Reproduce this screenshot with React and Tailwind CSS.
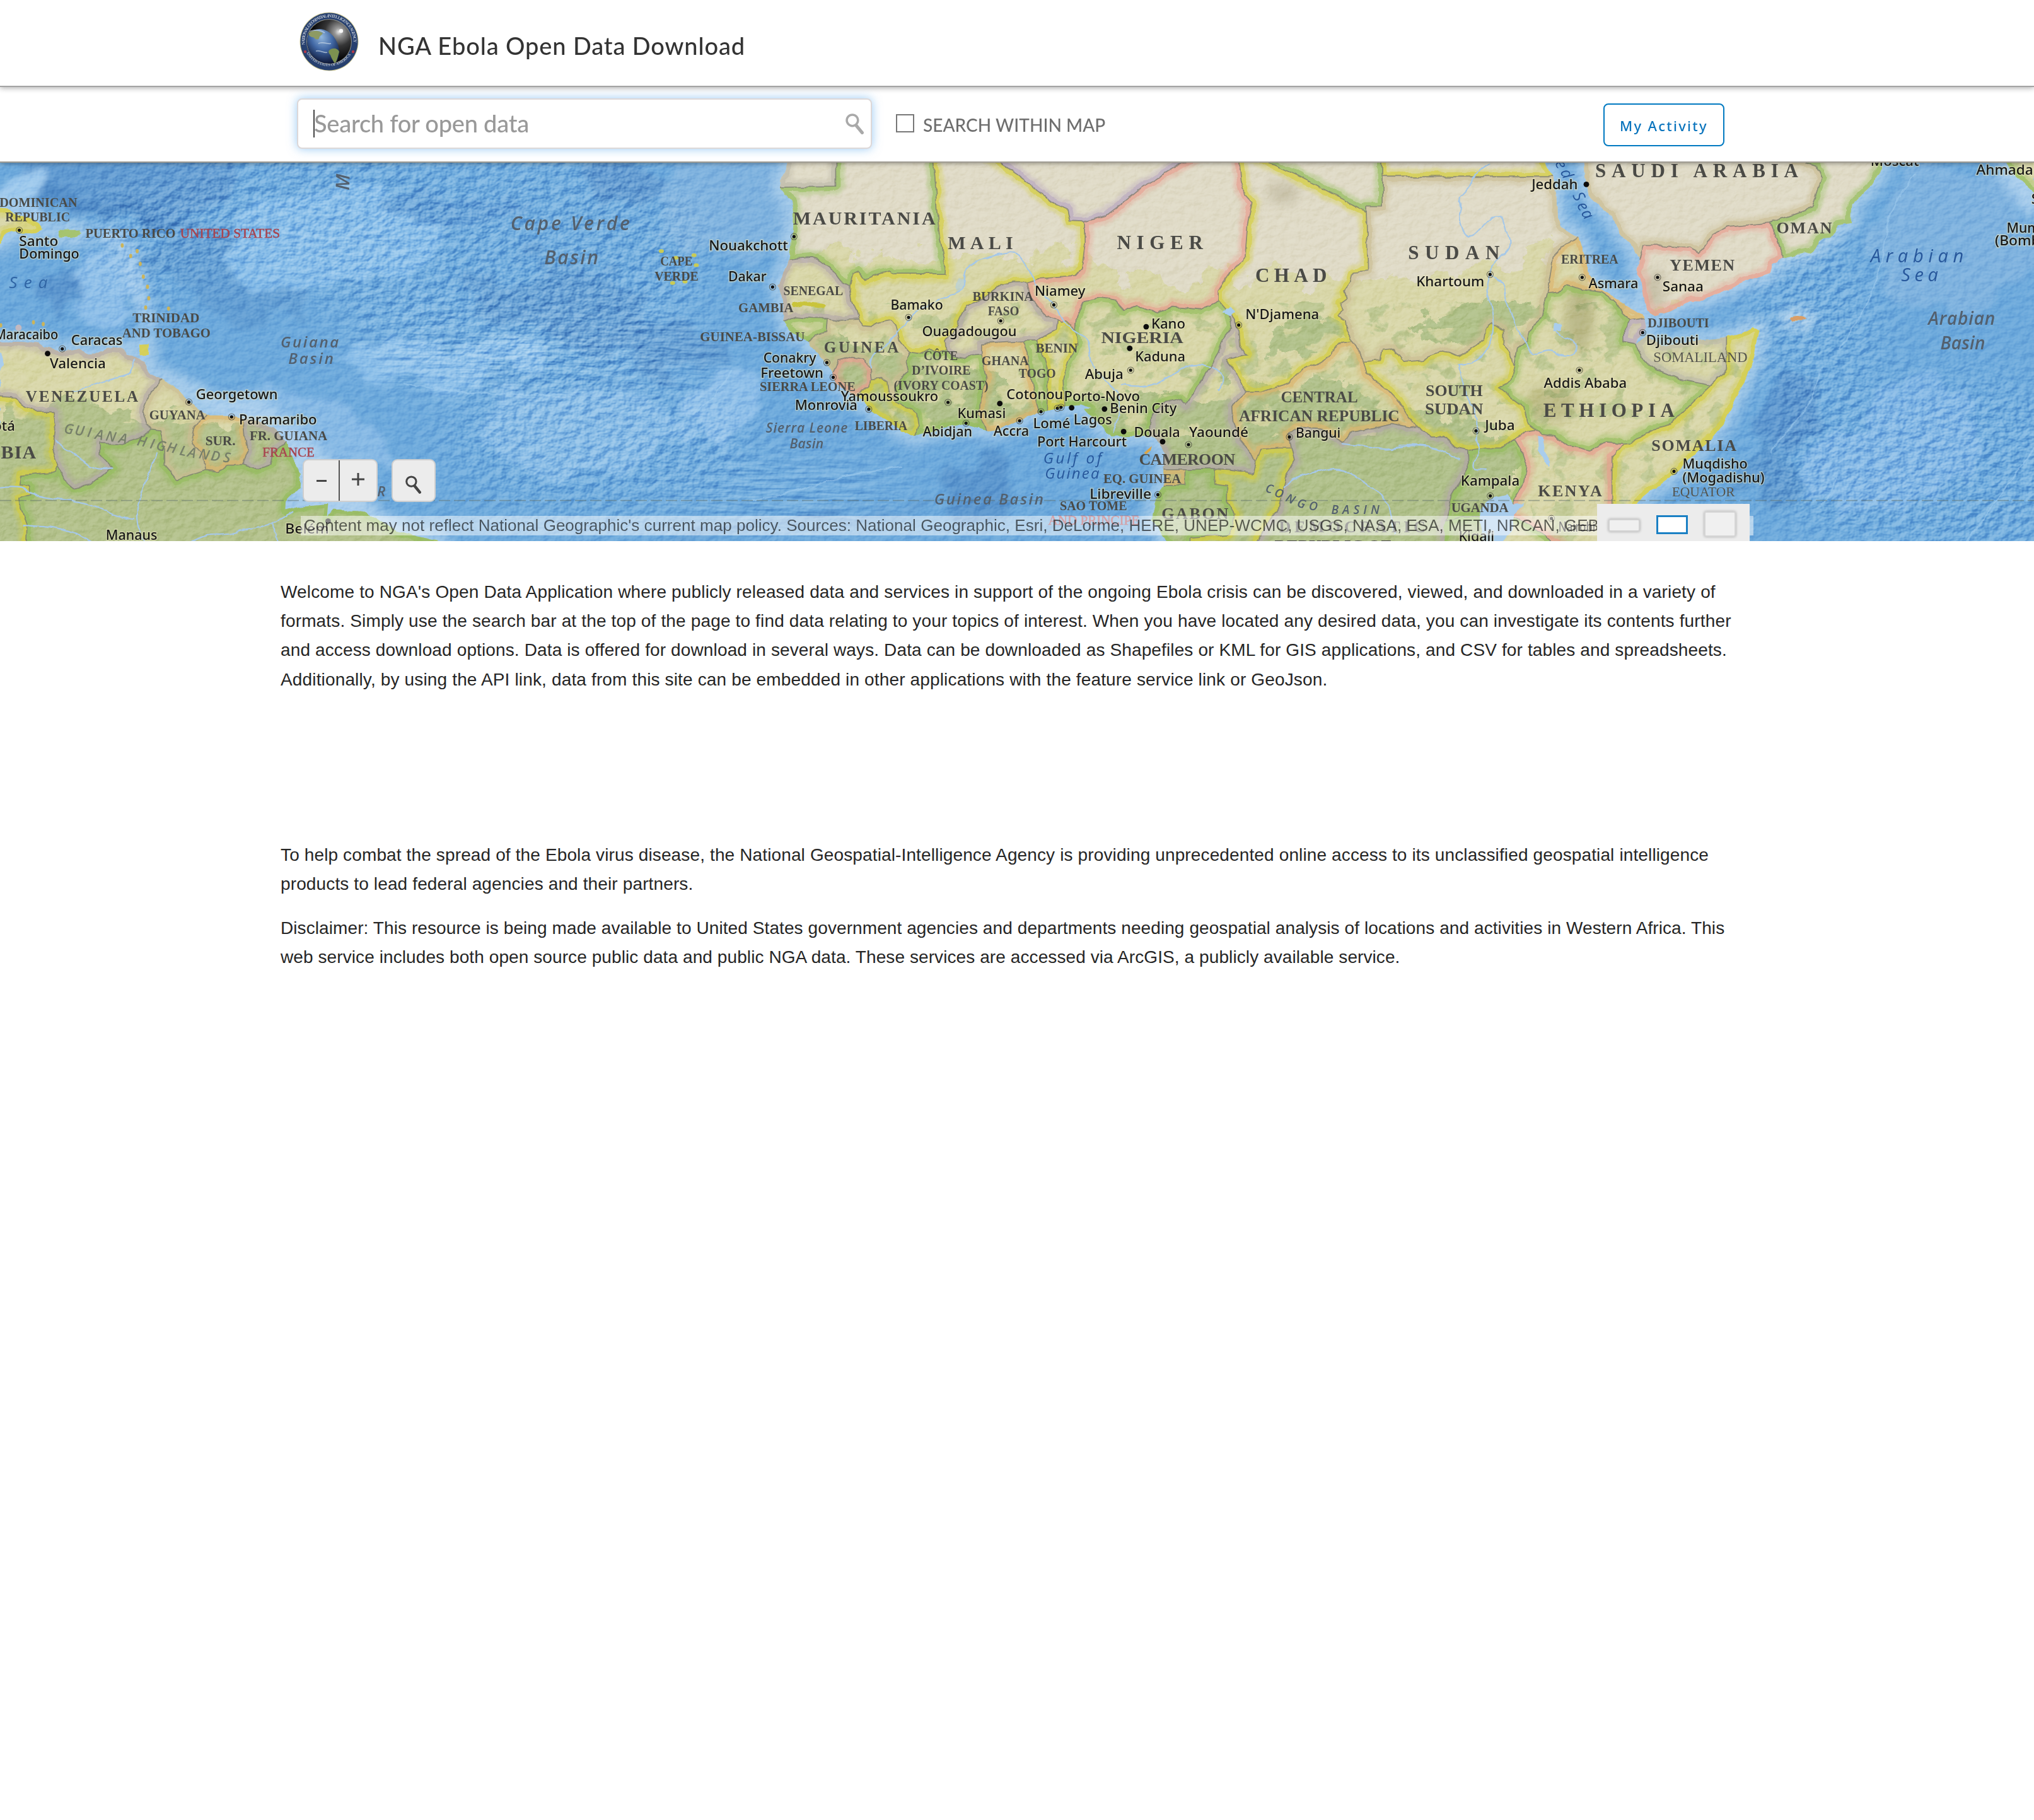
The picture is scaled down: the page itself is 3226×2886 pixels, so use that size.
import React from "react";

/* ---------- Map geometry ----------
   The map is surveyed on six sheets. Each sheet has its own origin and grid
   step; points are written as "SHEET x,y x,y ..." and projected to map pixels. */
const SHEETS = {
  A: [0, 0.40816],
  B: [640, 0.35714],
  C: [1180, 0.35714],
  D: [1700, 0.35714],
  E: [2220, 0.33333],
  F: [2700, 0.33546],
};
const TOP = 250;
const STEP_Y = 0.39;
const px = (s, x) => SHEETS[s][0] + x * SHEETS[s][1];
const py = (y) => TOP + y * STEP_Y;

function pts(src) {
  let sheet = "A";
  const out = [];
  src.split(/\s+/).forEach((t) => {
    if (SHEETS[t]) sheet = t;
    else if (t.includes(",")) {
      const [x, y] = t.split(",").map(Number);
      out.push([px(sheet, x), py(y)]);
    }
  });
  return out;
}
const toD = (p) => "M" + p.map(([x, y]) => x.toFixed(1) + " " + y.toFixed(1)).join("L");
const line = (src) => toD(pts(src));

/* Smooth curve through points, used for rivers and sea ridges. */
function curve(src) {
  const p = pts(src);
  let d = `M${p[0][0]} ${p[0][1]}`;
  for (let i = 1; i < p.length - 1; i++) {
    const mx = (p[i][0] + p[i + 1][0]) / 2;
    const my = (p[i][1] + p[i + 1][1]) / 2;
    d += `Q${p[i][0]} ${p[i][1]} ${mx} ${my}`;
  }
  const l = p[p.length - 1];
  return d + `L${l[0]} ${l[1]}`;
}

/* Arcs shared by neighbouring countries; names starting with "c_" are coasts. */
const ARCS = {
  c_ws: "C 200,-60 195,20 180,60 165,85 160,118",
  ws_mr: "C 160,118 410,116 410,20 410,-60",
  c_mr: "C 160,118 185,150 210,175 218,220 215,300 205,370 200,412",
  mr_sn: "C 200,412 230,408 300,403 340,415 375,440 400,465 430,500 470,520",
  mr_ml: "C 470,520 485,470 510,460 540,495 580,480 640,462 660,473 893,473 895,440 890,420 870,330 855,200 850,100 842,20 838,-60",
  c_sn: "C 200,412 190,440 165,490 148,515 165,545 172,590 175,640 178,662",
  sn_gw: "C 178,662 230,645 300,650 370,652",
  sn_gn: "C 370,652 430,662 510,658",
  sn_ml: "C 470,520 480,580 500,620 510,658",
  ml_gn: "C 510,658 530,682 560,685 590,670 650,660 675,680 690,740 715,770 735,790",
  c_gw: "C 178,662 205,700 240,725 290,750",
  gw_gn: "C 370,652 365,705 320,715 290,750",
  c_gn: "C 290,750 320,790 350,820 395,870",
  gn_sl: "C 395,870 420,825 480,808 530,815 560,860 565,900",
  c_sl: "C 395,870 410,920 450,945 500,965",
  sl_lr: "C 565,900 560,930 500,965",
  gn_lr: "C 565,900 610,895 635,910 645,965 670,990",
  lr_ci: "C 670,990 720,1010 770,1040 778,1090 760,1135",
  c_lr: "C 500,965 560,1020 620,1060 700,1110 760,1135",
  gn_ci: "C 735,790 715,830 725,870 690,900 670,940 670,990",
  ml_ci: "C 735,790 780,795 830,775 870,790 895,780",
  ci_bf: "C 895,780 930,805 980,815 1010,803 1055,800",
  ci_gh: "C 1055,800 1080,900 1050,980 1045,1040 1075,1110",
  c_ci: "C 760,1135 830,1110 900,1095 985,1085 1075,1110",
  ml_bf: "C 895,780 890,745 930,715 960,650 990,600 1060,570 1130,520 1200,505 1255,505",
  bf_ne: "C 1255,505 1270,560 1310,610 1345,640 1390,660",
  bf_bj: "C 1390,660 1385,700 1330,725 1300,745",
  bf_tg: "C 1300,745 1240,745",
  bf_gh: "C 1240,745 1150,750 1055,755 1055,800",
  gh_tg: "C 1240,745 1260,790 1275,900 1290,960 1310,1035",
  tg_bj: "C 1300,745 1330,810 1350,870 1345,1025",
  c_tg: "C 1310,1035 1345,1025",
  c_gh: "C 1075,1110 1130,1105 1220,1070 1310,1035",
  bj_ne: "C 1390,660 1410,668 1430,660 1470,695",
  bj_ng: "C 1470,695 1480,760 1435,840 1420,900 1425,1010",
  c_bj: "C 1345,1025 1425,1010",
  ml_ne: "C 1255,505 1310,490 1390,485 1470,480 1500,450 1515,350 1515,258",
  ml_dz: "C 1020,-60 1140,20 1230,75 1300,130 1370,180 1440,210 1450,255 1515,258",
  dz_ne: "C 1515,258 D 150,235 200,200 300,125 480,25 640,-60",
  ne_td: "D 740,-60 745,20 752,90 770,150 800,180 780,270 770,400 700,470 650,540 650,578",
  ne_ng: "D 14,695 20,650 50,585 130,570 190,580 230,620 290,600 380,632 450,605 570,615 650,578",
  td_ly: "D 700,-60 880,20 1000,70 1150,142 1308,218",
  ly_sd: "D 1308,218 1308,197 1378,197 1378,75",
  ly_eg: "D 1378,75 1378,-60",
  eg_sd: "D 1378,75 1568,75 E 730,75",
  c_eg: "E 640,-60 700,40 730,75",
  td_sd: "D 1308,218 1315,460 1250,465 1240,500 1210,540 1220,570 1190,590 1205,620 1180,640 1215,660 1220,700 1245,745",
  td_cf: "D 1245,745 1180,755 1140,810 1090,840 1020,860 970,910 900,930 840,950 775,950",
  ng_td: "D 650,578 690,620",
  td_cm: "D 690,620 720,660 745,700 750,760 775,800 685,820 730,870 775,950",
  ng_cm: "D 690,620 710,690 670,740 650,790 600,870 560,930 510,1000 480,980 400,1000 355,1040 345,1130",
  c_ng: "C 1425,1010 1500,1005 1545,1020 D 60,1020 120,1080 170,1135 250,1130 345,1130",
  c_cm: "D 345,1130 390,1160 415,1210 410,1266",
  cm_gq: "D 410,1266 505,1266",
  cm_ga: "D 505,1266 630,1266",
  cm_cg: "D 630,1266 700,1270 805,1285 815,1235",
  cm_cf: "D 775,950 710,1010 715,1070 750,1150 805,1210 815,1235",
  cf_cg: "D 815,1235 840,1185 920,1180 975,1180",
  cf_cd: "D 975,1180 960,1120 1010,1095 1110,1100 1200,1155 1250,1115 1330,1100 1420,1080 1500,1095 E 75,1090",
  cf_ss: "D 1295,825 1310,880 1390,930 1456,995 E 40,1050 75,1090",
  cf_sd: "D 1245,745 1280,790 1295,825",
  sd_ss: "D 1295,825 1370,820 1380,780 1430,775 E 20,830 110,822 140,805 200,785 240,790 280,805 330,780 400,740 410,690 440,670 490,700 490,760 530,800 545,850",
  sd_et: "E 545,850 560,770 605,740 630,680 680,640 700,550",
  sd_er: "E 700,550 715,480 730,400 775,360 850,320",
  c_sd: "E 730,75 745,150 750,240 770,280 850,320",
  c_er: "E 850,320 880,400 900,470 950,530 1010,560 1080,600 1150,635 1165,650",
  er_et: "E 700,550 760,545 800,515 870,535 960,545 1020,580 1060,630 1100,660",
  er_dj: "E 1100,660 1165,650",
  et_dj: "E 1100,660 1065,700 1065,745 1125,755",
  c_dj: "E 1165,650 1172,690 1150,712 1125,755",
  et_sl: "E 1125,755 1150,810 1220,860 1330,900 1480,925",
  sl_so: "E 1480,925 1555,860 1555,728",
  c_sml: "E 1125,755 1175,725 1250,765 1400,745 1555,728",
  c_so: "E 1555,728 F 180,715 240,685 270,700 255,760 240,830 200,900 150,990 100,1080 30,1150 0,1175 E 1380,1225 1300,1290 1200,1350 1130,1400 1080,1470 1060,1650",
  et_so: "E 1480,925 1400,990 1290,1085 1200,1105 1100,1158 1065,1162",
  et_ke: "E 650,1105 680,1125 740,1130 800,1170 910,1190 980,1155 1065,1162",
  so_ke: "E 1065,1162 1010,1220 1010,1400 1010,1650",
  ss_et: "E 650,1105 610,1080 590,1010 540,980 470,932 530,900 545,850",
  ss_ke: "E 545,1140 600,1112 650,1105",
  ss_ug: "E 320,1190 400,1180 480,1180 545,1140",
  ss_cd: "E 75,1090 150,1132 210,1132 270,1180 320,1190",
  cd_ug: "E 320,1190 325,1260 250,1370 220,1480",
  ug_ke: "E 545,1140 580,1190 605,1260 590,1330 540,1390 535,1460",
  ug_tz: "E 220,1480 300,1458 535,1460",
  ke_tz: "E 535,1460 640,1505 740,1564 800,1650",
  cg_cd: "D 975,1180 988,1230 950,1290 920,1420 860,1500 820,1564 800,1650",
  ga_cg: "D 630,1266 632,1325 690,1332 690,1400 722,1450 700,1530 525,1545 525,1650",
  gq_ga: "D 505,1266 505,1330 408,1330",
  c_gq: "D 410,1266 408,1330",
  c_ga: "D 408,1330 390,1360 370,1420 358,1470 420,1560 500,1650",
  c_sa: "E 860,-60 875,20 880,80 900,150 960,200 1010,240 1060,320 1110,360 1140,415",
  sa_ye: "E 1140,415 1160,355 1250,355 1380,365 1425,385 1450,360 1490,310 F 120,280 320,262",
  sa_om: "F 320,262 520,200 565,80 540,30 440,10 430,-60",
  ye_om: "F 320,262 385,405",
  c_ye: "E 1140,415 1132,460 1150,500 1160,560 1175,620 1215,640 1290,620 1380,580 F 0,580 100,540 230,490 320,465 335,430 385,405",
  c_om: "F 385,405 520,380 550,330 610,325 640,270 700,262 705,190 750,150 800,110 850,40 845,-60",
  c_ve: "A -60,745 60,745 150,755 170,770 240,788 300,775 340,797 380,795 420,775 470,768 500,800 560,830 590,880 630,900",
  ve_gy: "A 630,900 590,950 570,990 555,1030 570,1080 590,1105",
  c_gy: "A 630,900 680,930 730,985 780,1030 800,1045",
  gy_sr: "A 800,1045 755,1100 745,1160 790,1210 800,1270",
  gy_br: "A 590,1105 625,1110 640,1170 640,1250 690,1310 740,1290 800,1270",
  c_sr: "A 800,1045 900,1045 945,1060",
  sr_gf: "A 945,1060 950,1130 962,1190 940,1250",
  sr_br: "A 800,1270 850,1275 880,1250 940,1250",
  c_gf: "A 945,1060 1000,1070 1060,1100 1115,1150",
  gf_br: "A 940,1250 1000,1270 1050,1250 1060,1200 1115,1150",
  ve_br: "A 590,1105 540,1140 470,1165 390,1160 390,1205 440,1260 400,1290 350,1330 290,1345 250,1310 225,1252",
  co_ve: "A -60,965 60,975 100,1015 130,1030 205,1030 215,1100 205,1190 225,1252",
  co_br: "A 225,1252 215,1280 80,1292 75,1330 110,1335 120,1370 75,1385 80,1420 105,1490 100,1650",
  c_br: "A 1115,1150 1130,1210 1168,1280 1165,1340 1110,1400 1108,1435 1160,1420 1275,1410 1270,1465 1300,1430 1400,1435 1450,1460 1540,1515 B 60,1540 160,1560 200,1650",
  ug_low: "E 220,1480 190,1650",
  tz_low: "E 190,1650 220,1480",
  co_low: "A -60,1650",
};

const C = { green: "#93bd5a", yellow: "#d3cd3c", pink: "#e79f90", mauve: "#b2a6a9", orange: "#dcb46c", tan: "#cabd93", grey: "#bdb9a9", purple: "#b8a6bf" };

/* Country: id, border tint, ring of arcs in order */
const COUNTRIES = [
  ["ws", C.grey, "c_ws ws_mr"],
  ["mr", C.green, "ws_mr c_mr mr_sn mr_ml"],
  ["sn", C.mauve, "mr_sn sn_ml sn_gn sn_gw c_sn"],
  ["gw", C.green, "sn_gw gw_gn c_gw"],
  ["gn", C.tan, "sn_gn ml_gn gn_ci gn_lr gn_sl c_gn gw_gn"],
  ["sl", C.pink, "gn_sl sl_lr c_sl"],
  ["lr", C.yellow, "gn_lr lr_ci c_lr sl_lr"],
  ["ci", C.green, "ml_ci ci_bf ci_gh c_ci lr_ci gn_ci"],
  ["gh", C.orange, "bf_gh gh_tg c_gh ci_gh"],
  ["tg", C.green, "bf_tg tg_bj c_tg gh_tg"],
  ["bj", C.yellow, "bj_ne bj_ng c_bj tg_bj bf_bj"],
  ["bf", C.mauve, "ml_bf bf_ne bf_bj bf_tg bf_gh ci_bf"],
  ["ml", C.yellow, "mr_ml sn_ml ml_gn ml_ci ml_bf ml_ne ml_dz"],
  ["dz", C.purple, "ml_dz dz_ne"],
  ["ne", C.pink, "dz_ne ne_td ne_ng bj_ne bf_ne ml_ne"],
  ["ng", C.green, "ne_ng ng_td ng_cm c_ng bj_ng"],
  ["td", C.yellow, "ne_td ng_td td_cm td_cf td_sd td_ly"],
  ["ly", C.green, "td_ly ly_sd ly_eg"],
  ["eg", C.yellow, "ly_eg eg_sd c_eg"],
  ["sd", C.tan, "eg_sd c_sd sd_er sd_et sd_ss cf_sd td_sd ly_sd"],
  ["er", C.orange, "sd_er c_er er_dj er_et"],
  ["dj", C.purple, "er_dj c_dj et_dj"],
  ["et", C.green, "er_et et_dj et_sl et_so et_ke ss_et sd_et"],
  ["sml", C.grey, "c_sml sl_so et_sl"],
  ["so", C.yellow, "sl_so et_so so_ke c_so"],
  ["ke", C.pink, "ss_ke et_ke so_ke ke_tz ug_ke"],
  ["ug", C.green, "ss_ug ug_ke ug_tz cd_ug"],
  ["ss", C.yellow, "sd_ss ss_et ss_ke ss_ug ss_cd cf_ss"],
  ["cf", C.orange, "td_cf cm_cf cf_cg cf_cd cf_ss cf_sd"],
  ["cm", C.mauve, "ng_cm c_cm cm_gq cm_ga cm_cg cm_cf td_cm"],
  ["gq", C.orange, "cm_gq gq_ga c_gq"],
  ["ga", C.green, "cm_ga ga_cg c_ga gq_ga"],
  ["cg", C.yellow, "cm_cg cf_cg cg_cd ga_cg"],
  ["cd", C.mauve, "cf_cd ss_cd cd_ug ug_low cg_cd"],
  ["tz", C.green, "ug_tz ke_tz tz_low"],
  ["sa", C.tan, "c_sa sa_ye sa_om"],
  ["ye", C.pink, "sa_ye ye_om c_ye"],
  ["om", C.green, "sa_om ye_om c_om"],
  ["ve", C.mauve, "c_ve ve_gy ve_br co_ve"],
  ["gy", C.tan, "c_gy gy_sr gy_br ve_gy"],
  ["sr", C.orange, "c_sr sr_gf sr_br gy_sr"],
  ["gf", C.mauve, "c_gf gf_br sr_gf"],
  ["co", C.yellow, "co_ve co_br co_low"],
  ["br", C.green, "co_br ve_br gy_br sr_br gf_br c_br"],
];

const ISLANDS = [
  ["do", C.yellow, "A -60,195 30,205 60,225 100,240 150,262 165,290 140,305 60,300 20,315 5,345 -60,350"],
  ["pr", C.green, "A 230,292 310,292 318,305 300,322 232,320"],
  ["tt", C.yellow, "A 545,760 578,758 575,798 540,800"],
  ["skt", "#d98a52", "F 410,650 450,644 490,652 470,664 425,664"],
  ["in", C.green, "F 1380,-60 1480,70 1530,110 1600,165 1650,-60"],
];

/* Joins arcs into one ring, turning each to start where the last one ended. */
function ring(spec) {
  const out = spec.split(" ").map((n) => pts(ARCS[n]));
  const d2 = (a, b) => (a[0] - b[0]) ** 2 + (a[1] - b[1]) ** 2;
  const first = out[0];
  const next = out[1];
  const near = (p) => Math.min(d2(p, next[0]), d2(p, next[next.length - 1]));
  if (near(first[0]) < near(first[first.length - 1])) first.reverse();
  for (let i = 1; i < out.length; i++) {
    const end = out[i - 1][out[i - 1].length - 1];
    const a = out[i];
    if (d2(a[a.length - 1], end) < d2(a[0], end)) a.reverse();
  }
  return toD(out.flat()) + "Z";
}

const SHAPES = [
  ...COUNTRIES.map(([id, color, spec]) => [id, color, ring(spec)]),
  ...ISLANDS.map(([id, color, src]) => [id, color, line(src) + "Z"]),
];
const BORDERS = Object.keys(ARCS)
  .filter((k) => !k.startsWith("c_") && !k.endsWith("_low"))
  .map((k) => line(ARCS[k]))
  .join("");

const RIVERS = [
  "C 560,850 560,800 630,770 690,700 770,620 880,570 960,545 990,510 965,470 1010,430 1080,400 1180,380 1220,390 1250,440 1285,480 1290,520 1390,610 1410,660 1470,700 1530,740 1535,800 1550,850 D 130,880 180,940 215,950 210,1040 180,1120",
  "D 215,925 320,940 430,890 500,845 580,840 610,850",
  "D 620,850 670,870 680,910 650,945",
  "E 430,20 370,50 330,120 280,160 295,200 280,240 310,315 350,322 400,270 450,232 490,240 500,290 530,330 520,380 440,420 430,470 405,540 440,600 450,680 440,740 400,800 350,835 280,840",
  "E 430,470 480,490 510,590 545,650 560,710 600,740 620,800 680,790 720,780 780,810 835,800 838,745 780,730 740,700",
  "E 280,840 290,900 320,970 370,1050 375,1100 360,1140 390,1190 355,1230 350,1270 410,1270",
  "E 0,1170 80,1165 200,1185 280,1230",
  "D 940,1340 980,1300 1100,1270 1200,1260 1280,1310 1400,1380 1410,1450 1440,1530",
  "D 1200,1160 1300,1170 1400,1190 1500,1170 1568,1175",
  "A 520,820 510,880 430,900 330,935 280,945",
  "A 215,1150 260,1190 330,1240 380,1265 440,1262",
  "A 610,1200 580,1280 545,1370 525,1470 560,1564",
  "A 0,1340 80,1330 120,1370 230,1390 330,1405 400,1430 450,1460 520,1470",
  "A 90,1495 200,1500 300,1530 360,1564",
  "A 740,1564 800,1530 880,1535 960,1510 1040,1500 1070,1480 1140,1440",
  "A 1065,1490 1075,1564",
];

/* Map labels: [sheet, x start, x end, baseline, text, kind, size] */
const LABELS = [
  ["A", -2, 300, 197, "DOMINICAN", "s", 21],
  ["A", 20, 272, 258, "REPUBLIC", "s", 21],
  ["A", 332, 682, 323, "PUERTO RICO", "s", 21],
  ["A", 700, 1088, 323, "UNITED STATES", "r", 21],
  ["A", 78, 230, 358, "Santo", "c"],
  ["A", 78, 312, 408, "Domingo", "c"],
  ["A", 35, 185, 528, "Sea", "b", 26],
  ["A", 515, 775, 669, "TRINIDAD", "s", 21],
  ["A", 475, 818, 730, "AND TOBAGO", "s", 21],
  ["A", -18, 230, 738, "Maracaibo", "c"],
  ["A", 280, 480, 760, "Caracas", "c"],
  ["A", 197, 415, 856, "Valencia", "c"],
  ["A", 100, 537, 992, "VENEZUELA", "s", 25],
  ["A", 765, 1083, 980, "Georgetown", "c"],
  ["A", 580, 798, 1063, "GUYANA", "s", 21],
  ["A", 932, 1235, 1083, "Paramaribo", "c"],
  ["A", 970, 1272, 1149, "FR. GUIANA", "s", 21],
  ["A", 798, 915, 1169, "SUR.", "s", 21],
  ["A", 1020, 1222, 1215, "FRANCE", "r", 21],
  ["A", -56, 62, 1109, "gotá", "c"],
  ["A", -128, 140, 1222, "OMBIA", "s", 30],
  ["A", 1090, 1316, 770, "Guiana", "w", 24],
  ["A", 1120, 1296, 837, "Basin", "w", 24],
  ["A", 415, 615, 1555, "Manaus", "c"],
  ["A", 1112, 1282, 1529, "Belém", "c"],
  ["A", 1466, 1492, 1376, "R", "w", 22],
  ["B", 475, 1005, 292, "Cape Verde", "w", 30],
  ["B", 625, 865, 431, "Basin", "w", 30],
  ["B", 1140, 1283, 436, "CAPE", "s", 21],
  ["B", 1115, 1310, 497, "VERDE", "s", 21],
  ["C", -152, 200, 374, "Nouakchott", "c"],
  ["C", -66, 104, 502, "Dakar", "c"],
  ["C", 218, 850, 270, "MAURITANIA", "s", 30],
  ["C", 905, 1195, 370, "MALI", "s", 30],
  ["C", 175, 440, 557, "SENEGAL", "s", 20],
  ["C", -25, 220, 626, "GAMBIA", "s", 21],
  ["C", -195, 270, 744, "GUINEA-BISSAU", "s", 21],
  ["C", 355, 687, 792, "GUINEA", "s", 25],
  ["C", 655, 888, 616, "Bamako", "c"],
  ["C", 1015, 1285, 580, "BURKINA", "s", 21],
  ["C", 1083, 1222, 640, "FASO", "s", 21],
  ["C", 1295, 1520, 560, "Niamey", "c"],
  ["C", 795, 1215, 725, "Ouagadougou", "c"],
  ["C", 1295, 1482, 792, "BENIN", "s", 21],
  ["C", 798, 950, 822, "CÔTE", "s", 21],
  ["C", 745, 1007, 880, "D’IVOIRE", "s", 21],
  ["C", 665, 1085, 942, "(IVORY COAST)", "s", 21],
  ["C", 1055, 1265, 843, "GHANA", "s", 20],
  ["C", 1220, 1385, 894, "TOGO", "s", 21],
  ["C", 90, 325, 832, "Conakry", "c"],
  ["C", 78, 357, 893, "Freetown", "c"],
  ["C", 70, 495, 948, "SIERRA LEONE", "s", 21],
  ["C", 435, 867, 990, "Yamoussoukro", "c"],
  ["C", 230, 508, 1026, "Monrovia", "c"],
  ["C", 1170, 1422, 981, "Cotonou", "c"],
  ["C", 1425, 1763, 989, "Porto-Novo", "c"],
  ["C", 952, 1167, 1057, "Kumasi", "c"],
  ["C", 798, 1018, 1133, "Abidjan", "c"],
  ["C", 1112, 1270, 1130, "Accra", "c"],
  ["C", 1288, 1453, 1100, "Lomé", "c"],
  ["C", 492, 725, 1108, "LIBERIA", "s", 21],
  ["C", 97, 460, 1118, "Sierra Leone", "w", 21],
  ["C", 203, 353, 1182, "Basin", "w", 21],
  ["C", 845, 1330, 1411, "Guinea Basin", "w", 24],
  ["D", 12, 183, 1083, "Lagos", "c"],
  ["D", -150, 248, 1174, "Port Harcourt", "c"],
  ["D", -127, 132, 1242, "Gulf of", "v", 24],
  ["D", -120, 122, 1304, "Guinea", "v", 24],
  ["D", 200, 582, 370, "NIGER", "s", 31],
  ["D", 815, 1132, 503, "CHAD", "s", 31],
  ["D", 357, 508, 693, "Kano", "c"],
  ["D", 130, 495, 752, "NIGERIA", "s", 26],
  ["D", 285, 508, 827, "Kaduna", "c"],
  ["D", 62, 233, 899, "Abuja", "c"],
  ["D", 775, 1102, 656, "N'Djamena", "c"],
  ["D", 173, 470, 1037, "Benin City", "c"],
  ["D", 280, 485, 1134, "Douala", "c"],
  ["D", 525, 788, 1134, "Yaoundé", "c"],
  ["D", 298, 725, 1247, "CAMEROON", "s", 26],
  ["D", 140, 485, 1322, "EQ. GUINEA", "s", 21],
  ["D", 83, 357, 1387, "Libreville", "c"],
  ["D", -53, 245, 1434, "SAO TOME", "s", 21],
  ["D", -105, 300, 1492, "AND PRINCIPE", "r", 20],
  ["D", 398, 695, 1468, "GABON", "s", 26],
  ["D", 928, 1270, 995, "CENTRAL", "s", 26],
  ["D", 742, 1455, 1070, "AFRICAN REPUBLIC", "s", 26],
  ["D", 998, 1198, 1139, "Bangui", "c"],
  ["D", 1152, 1366, 1449, "BASIN", "w", 19],
  ["D", 920, 1570, 1522, "DEMOCRATIC", "s", 26],
  ["D", 900, 1420, 1600, "REPUBLIC OF", "s", 26],
  ["E", 40, 475, 410, "SUDAN", "s", 31],
  ["E", 83, 407, 522, "Khartoum", "c"],
  ["E", 930, 1896, 77, "SAUDI ARABIA", "s", 31],
  ["E", 632, 852, 126, "Jeddah", "c"],
  ["E", 768, 1040, 429, "ERITREA", "s", 21],
  ["E", 903, 1140, 529, "Asmara", "c"],
  ["E", 1285, 1593, 457, "YEMEN", "s", 26],
  ["E", 1255, 1450, 542, "Sanaa", "c"],
  ["E", 1180, 1472, 688, "DJIBOUTI", "s", 21],
  ["E", 1177, 1427, 759, "Djibouti", "c"],
  ["E", 1207, 1655, 830, "SOMALILAND", "n", 24],
  ["E", 690, 1085, 934, "Addis Ababa", "c"],
  ["E", 683, 1308, 1053, "ETHIOPIA", "s", 31],
  ["E", 123, 395, 969, "SOUTH", "s", 26],
  ["E", 120, 397, 1044, "SUDAN", "s", 26],
  ["E", 410, 552, 1108, "Juba", "c"],
  ["E", 1198, 1602, 1192, "SOMALIA", "s", 26],
  ["E", 1350, 1660, 1263, "Muqdisho", "c"],
  ["E", 1350, 1740, 1320, "(Mogadishu)", "c"],
  ["E", 1295, 1595, 1376, "EQUATOR", "n", 22],
  ["E", 295, 575, 1334, "Kampala", "c"],
  ["E", 658, 962, 1377, "KENYA", "s", 26],
  ["E", 245, 518, 1440, "UGANDA", "s", 21],
  ["E", 285, 455, 1560, "Kigali", "c"],
  ["E", 760, 935, 1520, "Nairobi", "c"],
  ["F", 350, 613, 305, "OMAN", "s", 26],
  ["F", 800, 1028, 30, "Moscat", "c"],
  ["F", 1300, 1690, 66, "Ahmadabad", "c"],
  ["F", 1443, 1640, 302, "Mumb", "c"],
  ["F", 1388, 1640, 355, "(Bomba", "c"],
  ["F", 1560, 1590, 186, "S", "c"],
  ["F", 795, 1235, 425, "Arabian", "v", 29],
  ["F", 940, 1115, 502, "Sea", "v", 29],
  ["F", 1068, 1384, 678, "Arabian", "w", 28],
  ["F", 1125, 1337, 779, "Basin", "w", 28],
];

/* Letters set along a curve: [sheet, x, baseline, angle, letter, size, kind] */
const SPREAD = [
  ...[["G", 265, 1122, 8], ["U", 307, 1128, 8], ["I", 345, 1135, 9], ["A", 383, 1145, 10], ["N", 428, 1152, 10], ["A", 475, 1160, 11], ["H", 548, 1172, 12], ["I", 588, 1182, 12], ["G", 622, 1190, 13], ["H", 663, 1198, 13], ["L", 708, 1210, 13], ["A", 742, 1218, 13], ["N", 790, 1225, 12], ["D", 835, 1232, 8], ["S", 880, 1238, 6]].map((r) => ["A", r[1], r[2], r[3], r[0], 22, "g"]),
  ...[["C", 872, 1362, 15], ["O", 914, 1380, 20], ["N", 963, 1402, 25], ["G", 1014, 1422, 18], ["O", 1070, 1433, 8]].map((r) => ["D", r[1], r[2], r[3], r[0], 19, "w"]),
  ...[["e", 745, 32, 68], ["d", 772, 72, 64], ["S", 830, 165, 62], ["e", 850, 205, 62], ["a", 872, 238, 58]].map((r) => ["E", r[1], r[2], r[3], r[0], 25, "v"]),
  ["A", 1358, 98, -88, "M", 30, "w"],
  ["A", 1358, 8, -88, "I", 30, "w"],
];

/* [sheet, x, y, capital] */
const DOTS = [
  ["A", 75, 293, 1], ["A", 185, 795, 0], ["A", 242, 776, 1], ["A", 734, 993, 1], ["A", 900, 1053, 1], ["A", 1275, 1478, 0],
  ["C", 222, 319, 1], ["C", 127, 524, 1], ["C", 731, 648, 1], ["C", 1376, 597, 1], ["C", 1140, 662, 1], ["C", 368, 832, 1],
  ["C", 396, 892, 1], ["C", 554, 1022, 1], ["C", 906, 994, 1], ["C", 1136, 999, 0], ["C", 986, 1079, 1], ["C", 1224, 1069, 1],
  ["C", 1319, 1032, 1], ["C", 1392, 1018, 1], ["C", 1408, 1014, 1], ["C", 1455, 1016, 0],
  ["D", 330, 686, 0], ["D", 257, 774, 0], ["D", 261, 863, 1], ["D", 741, 679, 1], ["D", 145, 1021, 0], ["D", 230, 1113, 0],
  ["D", 403, 1154, 0], ["D", 518, 1166, 1], ["D", 966, 1135, 1], ["D", 382, 1370, 1],
  ["E", 430, 473, 1], ["E", 888, 106, 0], ["E", 868, 485, 1], ["E", 1227, 485, 1], ["E", 1156, 710, 1], ["E", 855, 863, 1],
  ["E", 363, 1110, 1], ["E", 1305, 1275, 1], ["E", 431, 1375, 1], ["E", 722, 1467, 1],
];

const KIND = {
  s: { fill: "#4a4a46", fontFamily: '"Liberation Serif", serif', fontWeight: 700 },
  n: { fill: "#55554f", fontFamily: '"Liberation Serif", serif', fontWeight: 400 },
  r: { fill: "#a8444f", fontFamily: '"Liberation Serif", serif', fontWeight: 400, stroke: "#a8444f", strokeWidth: 0.5 },
  c: { fill: "#171717", fontFamily: '"Noto Sans", sans-serif', fontWeight: 500, stroke: "#e9e6c0", strokeOpacity: 0.5, strokeWidth: 3, paintOrder: "stroke" },
  w: { fill: "#53606e", fontFamily: '"Open Sans", sans-serif', fontStyle: "italic", fontWeight: 600 },
  g: { fill: "#77806a", fontFamily: '"Open Sans", sans-serif', fontStyle: "italic", fontWeight: 600 },
  b: { fill: "#2f64a4", fontFamily: '"Open Sans", sans-serif', fontStyle: "italic", fontWeight: 500 },
  v: { fill: "#27579b", fontFamily: '"Open Sans", sans-serif', fontStyle: "italic", fontWeight: 500 },
};

function Label({ row }) {
  const [s, x1, x2, y, text, kind, size = 22.5] = row;
  const a = px(s, x1) - (kind === "c" ? 1.5 : 0);
  const w = px(s, x2) - px(s, x1);
  const water = kind === "w" || kind === "v" || kind === "b";
  const stretch = kind === "c" || (!water && w / (text.length * size) < 0.72);
  return (
    <text x={a} y={py(y)} fontSize={size} textLength={text.length > 1 ? w : undefined} lengthAdjust={stretch ? "spacingAndGlyphs" : "spacing"} {...KIND[kind]}>
      {text}
    </text>
  );
}

/* Depth areas: [sheet, x, y, rx, ry, fill, angle] */
const DEPTHS = [
  ["A", 480, 80, 190, 60, "#5f99d0", 0],
  ["A", 480, 235, 120, 14, "#4f8ac6", 12],
  ["A", 880, 500, 130, 55, "#619cd2", 20],
  ["A", 1300, 330, 170, 90, "#80b8e6", 0],
  ["A", 420, 520, 55, 75, "#8abce7", 0],
  ["A", 240, 565, 32, 24, "#5a94cd", 0],
  ["A", 60, 150, 50, 40, "#9cc8ec", 0],
  ["A", 1200, 1110, 140, 50, "#85b8e4", 20],
  ["B", 250, 200, 120, 30, "#649fd5", 0],
  ["B", 1000, 80, 70, 35, "#5f98cf", 0],
  ["B", 1450, 200, 130, 80, "#7db1de", 0],
  ["B", 700, 560, 150, 50, "#619bd1", 0],
  ["B", 1000, 720, 160, 40, "#619bd1", 10],
  ["B", 150, 830, 160, 35, "#86bbe7", 0],
  ["B", 800, 1120, 170, 65, "#80b6e3", 0],
  ["B", 1420, 1000, 55, 60, "#8abce7", 20],
  ["C", 1040, 1340, 70, 45, "#5a95cd", 0],
  ["C", 200, 1480, 220, 14, "#619bd1", -8],
  ["F", 1180, 330, 130, 110, "#7db1de", 0],
  ["F", 410, 1020, 50, 60, "#5a94cd", 20],
  ["F", 320, 1300, 50, 50, "#5c97ce", 20],
  ["F", 900, 1200, 160, 90, "#7ab1e2", -30],
];

function WorldMap() {
  const land = SHAPES.map((s) => s[2]).join("");
  return (
    <svg className="block h-full w-full" viewBox="0 257 3226 601" preserveAspectRatio="none" aria-label="Basemap">
      <defs>
        <filter id="ragged" x="0" y="0" width="100%" height="100%">
          <feTurbulence type="fractalNoise" baseFrequency="0.045" numOctaves="3" seed="4" />
          <feDisplacementMap in="SourceGraphic" scale="8" xChannelSelector="R" yChannelSelector="G" />
        </filter>
        <filter id="torn" x="-5%" y="-5%" width="110%" height="110%">
          <feTurbulence type="fractalNoise" baseFrequency="0.02" numOctaves="5" seed="9" />
          <feDisplacementMap in="SourceGraphic" scale="80" xChannelSelector="R" yChannelSelector="G" />
        </filter>
        <filter id="tornSea" x="-5%" y="-5%" width="110%" height="110%">
          <feTurbulence type="fractalNoise" baseFrequency="0.012" numOctaves="5" seed="21" result="n" />
          <feDisplacementMap in="SourceGraphic" in2="n" scale="110" xChannelSelector="R" yChannelSelector="G" />
          <feGaussianBlur stdDeviation="4" />
        </filter>
        <filter id="patches" x="0" y="0" width="100%" height="100%" colorInterpolationFilters="sRGB">
          <feTurbulence type="fractalNoise" baseFrequency="0.022 0.028" numOctaves="5" seed="12" />
          <feColorMatrix type="matrix" values="0 0 0 0 0.84  0 0 0 0 0.835  0 0 0 0 0.64  14 0 0 0 -7.9" />
        </filter>
        <filter id="patchesGreen" x="0" y="0" width="100%" height="100%" colorInterpolationFilters="sRGB">
          <feTurbulence type="fractalNoise" baseFrequency="0.024 0.03" numOctaves="5" seed="33" />
          <feColorMatrix type="matrix" values="0 0 0 0 0.70  0 0 0 0 0.76  0 0 0 0 0.54  14 0 0 0 -7.9" />
        </filter>
        <filter id="relief" x="0" y="0" width="100%" height="100%" colorInterpolationFilters="sRGB">
          <feTurbulence type="fractalNoise" baseFrequency="0.06 0.08" numOctaves="3" seed="7" />
          <feDiffuseLighting surfaceScale="4" diffuseConstant="1.25" lightingColor="#ffffff">
            <feDistantLight azimuth="225" elevation="30" />
          </feDiffuseLighting>
        </filter>
        <filter id="ridges" x="0" y="0" width="100%" height="100%" colorInterpolationFilters="sRGB">
          <feTurbulence type="fractalNoise" baseFrequency="0.012 0.08" numOctaves="3" seed="17" />
          <feDiffuseLighting surfaceScale="4" diffuseConstant="1.25" lightingColor="#ffffff">
            <feDistantLight azimuth="250" elevation="30" />
          </feDiffuseLighting>
        </filter>
        <filter id="soft40" x="-20%" y="-20%" width="140%" height="140%"><feGaussianBlur stdDeviation="40" /></filter>
        <filter id="soft14" x="-10%" y="-20%" width="120%" height="140%"><feGaussianBlur stdDeviation="9" /></filter>
        <filter id="soft2"><feGaussianBlur stdDeviation="2" /></filter>
        <mask id="rough" maskUnits="userSpaceOnUse" x="0" y="250" width="3226" height="620">
          <rect x="0" y="250" width="3226" height="620" fill="#555" />
          <g filter="url(#soft40)" fill="#fff">
            <ellipse cx="540" cy="340" rx="300" ry="120" />
            <ellipse cx="820" cy="420" rx="300" ry="190" />
            <ellipse cx="950" cy="700" rx="240" ry="110" />
            <ellipse cx="230" cy="380" rx="90" ry="100" />
            <ellipse cx="3080" cy="740" rx="280" ry="140" />
            <ellipse cx="2880" cy="500" rx="100" ry="140" />
          </g>
        </mask>
        <mask id="banded" maskUnits="userSpaceOnUse" x="0" y="250" width="3226" height="620">
          <g filter="url(#soft40)" fill="#fff">
            <ellipse cx="860" cy="555" rx="320" ry="70" />
            <ellipse cx="520" cy="400" rx="170" ry="70" opacity=".5" />
            <ellipse cx="1240" cy="780" rx="200" ry="50" />
          </g>
        </mask>
        <clipPath id="land">
          {SHAPES.map(([id, , d]) => <path key={id} d={d} />)}
        </clipPath>
        {SHAPES.map(([id, , d]) => (
          <clipPath key={id} id={"in-" + id}><path d={d} /></clipPath>
        ))}
      </defs>

      <g style={{ isolation: "isolate" }}>
        {/* ocean depth */}
        <rect x="0" y="250" width="3226" height="620" fill="#6ba8db" />
        <g filter="url(#tornSea)">
          {DEPTHS.map(([s, x, y, rx, ry, fill, rot]) => (
            <ellipse key={s + x + y} cx={px(s, x)} cy={py(y)} rx={rx} ry={ry} fill={fill} transform={`rotate(${rot} ${px(s, x)} ${py(y)})`} />
          ))}
        </g>

        {/* continental shelf */}
        <g filter="url(#soft14)">
          <path d={land} fill="#a9cdec" stroke="#a9cdec" strokeWidth="30" strokeLinejoin="round" opacity=".85" />
          <path d={line("A 560,820 700,880 850,960 1020,980 1200,1130 1300,1250 1420,1380 1560,1500 1200,1420 1000,1150")} fill="#a9cdec" />
          <path d={line("A 380,300 450,330 500,400 560,620 590,700")} fill="none" stroke="#9cc6ea" strokeWidth="26" />
          <path d={line("F 1380,60 1440,120 1500,200 1568,270 1568,20")} fill="#a9cdec" />
        </g>

        {/* sea-floor texture */}
        <g mask="url(#rough)" opacity=".6" style={{ mixBlendMode: "soft-light" }}>
          <rect x="0" y="250" width="3226" height="620" filter="url(#relief)" />
        </g>
        <g mask="url(#banded)" opacity=".5" style={{ mixBlendMode: "soft-light" }}>
          <rect x="0" y="250" width="3226" height="620" filter="url(#ridges)" />
        </g>
        <g fill="none" stroke="#a5cff0" strokeWidth="2.500" opacity=".5" filter="url(#ragged)">
          <path d={curve("F 1010,60 930,140 870,280 850,430 790,580 650,780")} />
          <path d={curve("F 560,850 540,960 450,1060 320,1200")} />
          <path d={curve("F 640,1300 600,1370 560,1410")} />
          <path d={curve("F 1568,1180 1400,1380 1250,1564")} />
          <path d={curve("C 20,1400 250,1350 450,1290 700,1260")} />
          <path d={curve("B 1460,860 1400,960 1300,1030")} />
          <path d={curve("B 0,920 200,950 500,965 760,960")} />
        </g>

        {/* land cover, then the tinted inner edge of every country */}
        <g filter="url(#ragged)">
          <g clipPath="url(#land)">
            <rect x="0" y="250" width="3226" height="620" fill="#d8d6a8" />
            <g filter="url(#torn)">
              <path fill="#dfdac6" d="M1150 150L1230 400L1420 400L1500 410L1640 400L1720 400L1780 440L1860 450L1960 440L2140 440L2300 440L2380 420L2500 380L2560 480L2640 500L3100 380L3100 150Z" />
              <path fill="#afbf89" d="M1200 565L1330 530L1370 550L1560 590L1640 620L1700 620L1790 640L1900 640L1940 580L1960 620L2060 600L2150 610L2230 650L2310 650L2400 700L2400 760L2330 950L1240 950Z" />
              <path fill="#b2c08a" d="M-60 690L100 620L240 660L470 660L620 780L760 950L-60 950Z" />
              <path fill="#b0c089" d="M2240 520L2330 480L2420 470L2460 500L2400 530L2300 540Z M2010 520L2110 500L2130 540L2030 570Z" />
            </g>
            <rect x="1200" y="480" width="1600" height="160" filter="url(#patchesGreen)" opacity=".7" />
            <rect x="1200" y="520" width="1250" height="170" filter="url(#patches)" opacity=".85" />
            <rect x="0" y="540" width="480" height="130" filter="url(#patches)" opacity=".9" />
            <rect x="2430" y="640" width="330" height="220" filter="url(#patchesGreen)" opacity=".6" />
            <g style={{ mixBlendMode: "soft-light" }} opacity=".2">
              <rect x="0" y="250" width="3226" height="620" filter="url(#relief)" />
            </g>
            <g style={{ mixBlendMode: "multiply" }} filter="url(#soft14)" opacity=".32">
              <ellipse cx="2505" cy="505" rx="22" ry="55" fill="#8a8a58" />
              <ellipse cx="2460" cy="640" rx="40" ry="30" fill="#a3a26c" />
              <ellipse cx="2035" cy="305" rx="26" ry="18" fill="#b0a98f" />
              <ellipse cx="2625" cy="460" rx="14" ry="34" fill="#a39a7c" />
            </g>
          </g>
          {SHAPES.map(([id, color, d]) => (
            <g key={id} clipPath={`url(#in-${id})`} fill="none" stroke={color} strokeLinejoin="round">
              <path d={d} strokeWidth="26" opacity=".33" filter="url(#soft2)" />
              <path d={d} strokeWidth="14" opacity=".6" />
            </g>
          ))}
          <path d={BORDERS} fill="none" stroke="#7b7b70" strokeWidth="1.800" opacity=".75" strokeLinejoin="round" />
          <path d={line("C 225,602 270,592 310,598 350,603")} fill="none" stroke="#c9c43a" strokeWidth="7" strokeLinecap="round" />
          <g fill="none" stroke="#a6c8e8" strokeWidth="2.200" strokeLinecap="round">
            {RIVERS.map((r) => <path key={r} d={curve(r)} />)}
          </g>
          <g fill="#a9cdec">
            <path d={line("E 735,670 775,672 772,700 740,702") + "Z"} />
            <path d={line("E 655,1130 682,1135 690,1190 718,1230 710,1255 680,1215 660,1190") + "Z"} />
            <path d={line("E 390,1420 440,1385 510,1370 540,1410 590,1405 545,1450 530,1520 480,1564 400,1564 380,1480") + "Z"} />
            <path d={line("D 668,630 705,605 722,622 700,645") + "Z"} />
            <path d={line("A -60,780 5,790 18,840 0,870 -60,880") + "Z"} />
            <path d={line("C 935,520 955,490 985,495 970,540 940,545") + "Z"} opacity=".5" />
          </g>
        </g>

        {/* small islands */}
        <g fill="#cbb45a">
          {[[475, 355], [508, 398], [533, 378], [545, 430], [557, 482], [573, 523], [578, 570], [566, 608], [655, 612], [130, 668], [168, 675], [3, 680]].map(([x, y]) => (
            <ellipse key={x} cx={px("A", x)} cy={py(y)} rx="2.400" ry="3.400" />
          ))}
          {[[1145, 378], [1300, 435], [1195, 508], [1250, 502], [1210, 405], [1290, 395]].map(([x, y]) => (
            <ellipse key={x} cx={px("B", x)} cy={py(y)} rx="4" ry="3" fill="#c9cb55" />
          ))}
          <path d={line("D 320,1200 355,1172 350,1190 330,1205") + "Z"} fill="#dca548" />
          <ellipse cx={px("A", 72)} cy={py(690)} rx="5" ry="5" fill="#c3b9c0" />
        </g>

        <path d="M0 793.500H3226" stroke="#5f6f6a" strokeWidth="1.600" strokeDasharray="18 6" opacity=".5" />

        <g>
          {DOTS.map(([s, x, y, cap]) => (
            <g key={s + x + "-" + y} transform={`translate(${px(s, x)} ${py(y)})`}>
              {cap ? (
                <>
                  <circle r="5" fill="none" stroke="#4a4a40" strokeWidth="1.200" opacity=".7" />
                  <circle r="2.600" fill="#111" />
                </>
              ) : (
                <circle r="4.400" fill="#0c0c0c" />
              )}
            </g>
          ))}
        </g>
        <g>
          {LABELS.map((row) => <Label key={row[0] + row[1] + row[3]} row={row} />)}
          {SPREAD.map(([s, x, y, r, ch, size, k]) => (
            <text key={s + x + ch} transform={`translate(${px(s, x)} ${py(y)}) rotate(${r})`} textAnchor="middle" fontSize={size} {...KIND[k]}>{ch}</text>
          ))}
        </g>
      </g>
    </svg>
  );
}

/* ---------- Page chrome ---------- */

function Seal() {
  return (
    <svg className="h-[94px] w-[94px]" viewBox="0 0 94 94" aria-label="NGA seal">
      <defs>
        <radialGradient id="space" cx=".72" cy=".28" r=".75">
          <stop offset="0" stopColor="#e8e8e8" />
          <stop offset=".12" stopColor="#999" />
          <stop offset=".42" stopColor="#353536" />
          <stop offset=".8" stopColor="#080809" />
        </radialGradient>
        <radialGradient id="earth" cx=".62" cy=".22" r=".8">
          <stop offset="0" stopColor="#94b8de" />
          <stop offset=".4" stopColor="#4269a6" />
          <stop offset=".85" stopColor="#0a1230" />
        </radialGradient>
        <clipPath id="disc"><circle cx="47" cy="47" r="35" /></clipPath>
        <path id="ringTop" d="M8.500 52A38.800 38.800 0 1 1 85.500 52" />
        <path id="ringBottom" d="M11 65A41.500 41.500 0 0 0 83 65" />
      </defs>
      <circle cx="47" cy="47" r="46.500" fill="#c9c38f" />
      <circle cx="47" cy="47" r="45.500" fill="#27406f" />
      <circle cx="47" cy="47" r="36" fill="#8d8f86" />
      <circle cx="47" cy="47" r="35" fill="url(#space)" />
      <g clipPath="url(#disc)">
        <ellipse cx="36" cy="59" rx="26" ry="33" transform="rotate(-22 36 59)" fill="url(#earth)" />
        <path d="M15 33C22 28 32 29 37 34C34 38 32 37 31 42C28 45 25 43 22 40C18 40 14 38 15 33Z" fill="#8d9a63" />
        <path d="M48 60C54 56 61 58 63 63C61 70 60 77 56 82C53 77 50 72 49 68C46 65 45 62 48 60Z" fill="#7c9150" />
        <path d="M12 33C22 27 33 28 40 33M30 50C38 46 44 52 50 50M26 62C34 60 38 66 44 64" stroke="#dfe8ef" strokeWidth="1.600" fill="none" opacity=".6" />
      </g>
      <circle cx="66" cy="30" r="3.200" fill="#fff" opacity=".9" />
      <g fill="#b9c2cf" fontFamily='"Liberation Serif", serif' fontSize="7" fontWeight="700">
        <text><textPath href="#ringTop" textLength="128">NATIONAL GEOSPATIAL-INTELLIGENCE AGENCY</textPath></text>
        <text fontSize="6"><textPath href="#ringBottom" textLength="84">UNITED STATES OF AMERICA</textPath></text>
      </g>
      <circle cx="9" cy="63" r="2.200" fill="#b23a4a" />
      <circle cx="85" cy="63" r="2.200" fill="#b23a4a" />
    </svg>
  );
}

function Magnifier({ className }) {
  return (
    <svg className={className} viewBox="0 0 28 32" fill="none" stroke="currentColor">
      <circle cx="10.500" cy="10.500" r="8.600" strokeWidth="3.400" />
      <path d="M16.500 18.500L25.500 29.500" strokeWidth="5" strokeLinecap="round" />
    </svg>
  );
}

function Header() {
  return (
    <header className="relative z-20 h-[138px] border-b-2 border-[#a3a3a3] bg-white shadow-[0_2px_8px_rgba(0,0,0,0.3)]">
      <div className="flex h-full items-start pl-[475px]">
        <div className="mt-[19px]"><Seal /></div>
        <h1 className="ml-[31px] mt-[46px] whitespace-nowrap font-['Lato',sans-serif] text-[38px] font-medium leading-[52px] tracking-[0.88px] text-[#333]">
          NGA Ebola Open Data Download
        </h1>
      </div>
    </header>
  );
}

function SearchBar() {
  return (
    <div className="relative z-10 flex h-[120px] items-start border-b-2 border-[#a09c93] bg-white pl-[471px] shadow-[0_2px_6px_rgba(0,0,0,0.3)]">
      <div className="mt-[18px] flex h-[80px] w-[912px] items-center rounded-[8px] border-2 border-[#ddd8d8] bg-white pl-[24px] pr-[11px] shadow-[0_0_16px_rgba(110,180,240,0.7)]">
        <div className="h-[44px] w-[2px] bg-[#444]" />
        <span className="-ml-[1px] mb-[3px] flex-1 whitespace-nowrap font-['Lato',sans-serif] text-[38px] font-medium leading-[44px] tracking-[-0.25px] text-[#999]">Search for open data</span>
        <Magnifier className="h-[33px] w-[29px] text-[#a9a9a9]" />
      </div>
      <div className="ml-[38px] mt-[43px] h-[29px] w-[29px] border-2 border-[#777] bg-white" />
      <span className="ml-[14px] mt-[40px] whitespace-nowrap font-['Lato',sans-serif] text-[28px] font-medium leading-[40px] tracking-[0.05px] text-[#6e6e6e]">SEARCH WITHIN MAP</span>
      <button className="ml-auto mr-[491px] mt-[26px] flex h-[68px] w-[192px] items-center justify-center rounded-[8px] border-2 border-[#0079c1] bg-white pt-[2px] font-['Noto_Sans',sans-serif] text-[22px] font-medium tracking-[2.3px] text-[#0a74bd]">
        My Activity
      </button>
    </div>
  );
}

function MapControls() {
  return (
    <>
      <div className="absolute left-[480px] top-[470px] flex h-[68px] w-[119px] overflow-hidden rounded-[9px] border-2 border-[#cfcfcf] bg-[#ececec]">
        <div className="flex w-[57px] items-center justify-center border-r-2 border-[#555]">
          <div className="h-[3px] w-[16px] bg-[#444]" />
        </div>
        <div className="flex flex-1 items-center justify-center">
          <svg className="mb-1 h-[20px] w-[20px]" viewBox="0 0 20 20" stroke="#444" strokeWidth="3"><path d="M0 10H20M10 0V20" /></svg>
        </div>
      </div>
      <div className="absolute left-[621px] top-[470px] flex h-[68px] w-[70px] items-center justify-center rounded-[9px] border-2 border-[#cfcfcf] bg-[#ececec]">
        <Magnifier className="mr-[2px] mt-[12px] h-[29px] w-[25px] text-[#444]" />
      </div>
      <div className="absolute left-[477px] top-[560px] h-[31px] w-[2304px] bg-white/50">
        <span className="block w-[2056px] overflow-hidden whitespace-nowrap pl-[5px] font-['Liberation_Sans',sans-serif] text-[26px] leading-[31px] tracking-[0.03px] text-black/60">
          Content may not reflect National Geographic's current map policy. Sources: National Geographic, Esri, DeLorme, HERE, UNEP-WCMC, USGS, NASA, ESA, METI, NRCAN, GEBCO
        </span>
      </div>
      <div className="absolute left-[2533px] top-[541px] flex h-[59px] w-[242px] items-center justify-between bg-[#ececec] pl-[18px] pr-[22px]">
        <div className="mt-[8px] h-[20px] w-[50px] rounded-[3px] border-2 border-[#d2d2d2] bg-[#f0f0f0] shadow-[0_0_4px_rgba(0,0,0,0.3)]" />
        <div className="mt-[6px] h-[30px] w-[50px] border-[3px] border-[#1a80c4] bg-white" />
        <div className="mt-[5px] h-[40px] w-[50px] rounded-[3px] border-2 border-[#d6d6d6] bg-[#f0f0f0] shadow-[0_0_4px_rgba(0,0,0,0.3)]" />
      </div>
    </>
  );
}

function Copy() {
  return (
    <section className="ml-[445px] mt-[58px] flex flex-col whitespace-nowrap font-['Liberation_Sans',sans-serif] text-[28px] leading-[46.200px] tracking-[0.15px] text-[#262626]">
      <p>
        Welcome to NGA's Open Data Application where publicly released data and services in support of the ongoing Ebola crisis can be discovered, viewed, and downloaded in a variety of<br />
        formats. Simply use the search bar at the top of the page to find data relating to your topics of interest. When you have located any desired data, you can investigate its contents further<br />
        <span className="tracking-[0.13px]">and access download options. Data is offered for download in several ways. Data can be downloaded as Shapefiles or KML for GIS applications, and CSV for tables and spreadsheets.</span><br />
        Additionally, by using the API link, data from this site can be embedded in other applications with the feature service link or GeoJson.
      </p>
      <p className="mt-[232px] tracking-[0.13px]">
        To help combat the spread of the Ebola virus disease, the National Geospatial-Intelligence Agency is providing unprecedented online access to its unclassified geospatial intelligence<br />
        products to lead federal agencies and their partners.
      </p>
      <p className="mt-[24px] tracking-[0.09px]">
        Disclaimer: This resource is being made available to United States government agencies and departments needing geospatial analysis of locations and activities in Western Africa. This<br />
        web service includes both open source public data and public NGA data. These services are accessed via ArcGIS, a publicly available service.
      </p>
    </section>
  );
}

export default function App() {
  return (
    <div className="h-[2886px] w-[3226px] overflow-hidden bg-white">
      <Header />
      <SearchBar />
      <div className="relative h-[600px] overflow-hidden bg-[#69a6da]">
        <WorldMap />
        <MapControls />
      </div>
      <Copy />
    </div>
  );
}
